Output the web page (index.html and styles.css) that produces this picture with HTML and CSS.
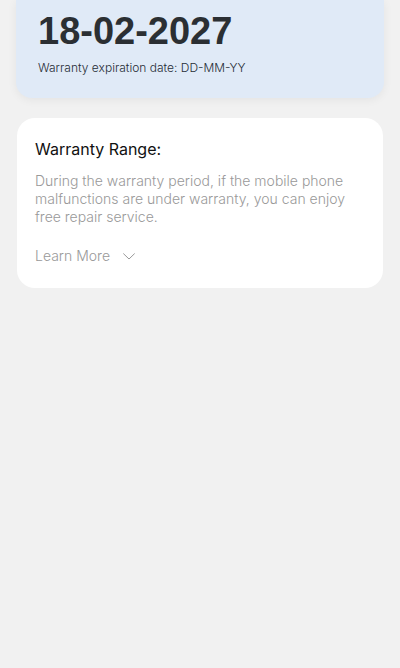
FILE: index.html
```html
<!DOCTYPE html>
<html lang="en">
<head>
  <meta charset="UTF-8">
  <meta name="viewport" content="width=device-width, initial-scale=1.0">
  <title>Warranty</title>
  <link rel="stylesheet" href="styles.css">
</head>
<body>
  <main class="page">
    <section class="expiry">
      <h1 class="expiry-date">18-02-2027</h1>
      <p class="expiry-note">Warranty expiration date: DD-MM-YY</p>
    </section>
    <section class="range">
      <h2 class="range-title">Warranty Range:</h2>
      <p class="range-text">During the warranty period, if the mobile phone malfunctions are under warranty, you can enjoy free repair service.</p>
      <button type="button" class="more">
        Learn More
        <svg class="chevron" viewBox="0 0 12 8" fill="none" stroke="currentColor" aria-hidden="true">
          <path d="M.3 1.5 6 7 11.7 1.5"/>
        </svg>
      </button>
    </section>
  </main>
</body>
</html>
```

FILE: styles.css
```css
* {
  box-sizing: border-box;
}
body {
  margin: 0;
  background: #f1f1f1;
  font-family: Inter, "Liberation Sans", sans-serif;
}
h1, h2, p {
  margin: 0;
}
.page {
  display: flex;
  flex-direction: column;
  gap: 20px;
  padding: 0 16px;
}
.expiry {
  padding: 9px 22px 20px;
  border-radius: 0 0 16px 16px;
  background: #e0eaf7;
  box-shadow: 0 2px 10px rgba(0, 0, 0, 0.06);
}
.expiry-date {
  color: #2b2f33;
  font-family: "Liberation Sans", Arial, sans-serif;
  font-size: 38px;
  font-weight: 700;
  line-height: 44px;
}
.expiry-note {
  margin-top: 5px;
  color: #262c36;
  font-size: 12px;
  font-weight: 300;
  line-height: 20px;
}
.range {
  margin: 0 1px;
  padding: 20px 18px 22px;
  border-radius: 18px;
  background: #fff;
}
.range-title {
  color: #111;
  font-size: 16px;
  font-weight: 400;
  line-height: 22px;
}
.range-text {
  margin-top: 12px;
  color: #999;
  font-size: 14px;
  font-weight: 300;
  line-height: 18px;
}
.more {
  display: flex;
  align-items: center;
  gap: 13px;
  margin-top: 20px;
  padding: 0;
  border: 0;
  background: none;
  color: #999;
  font: 300 14px/20px Inter, "Liberation Sans", sans-serif;
  cursor: pointer;
}
.chevron {
  width: 12px;
  height: 8px;
}
```
